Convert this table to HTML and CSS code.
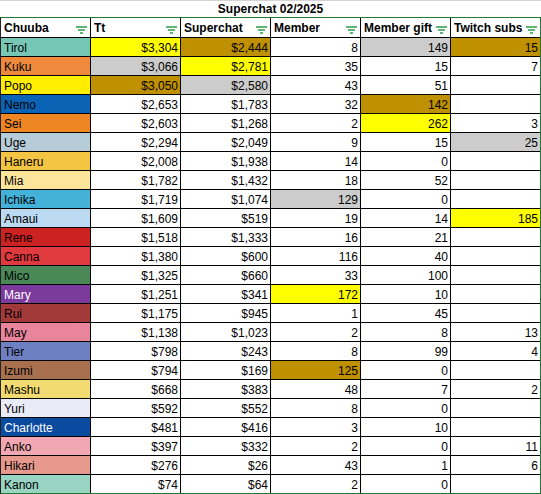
FILE: index.html
```html
<!DOCTYPE html>
<html>
<head>
<meta charset="utf-8">
<link rel="stylesheet" href="styles.css">
</head>
<body>
<div class="title">Superchat 02/2025</div>
<table class="sheet">
<thead>
<tr>
<th><div class="hd"><span>Chuuba</span><svg class="flt" viewBox="0 0 11 8"><path d="M0 1h11M2 4h7M4 7h3"/></svg></div></th>
<th><div class="hd"><span>Tt</span><svg class="flt" viewBox="0 0 11 8"><path d="M0 1h11M2 4h7M4 7h3"/></svg></div></th>
<th><div class="hd"><span>Superchat</span><svg class="flt" viewBox="0 0 11 8"><path d="M0 1h11M2 4h7M4 7h3"/></svg></div></th>
<th><div class="hd"><span>Member</span><svg class="flt" viewBox="0 0 11 8"><path d="M0 1h11M2 4h7M4 7h3"/></svg></div></th>
<th><div class="hd"><span>Member gift</span><svg class="flt" viewBox="0 0 11 8"><path d="M0 1h11M2 4h7M4 7h3"/></svg></div></th>
<th class="last"><div class="hd"><span>Twitch subs</span><svg class="flt" viewBox="0 0 11 8"><path d="M0 1h11M2 4h7M4 7h3"/></svg></div></th>
</tr>
</thead>
<tbody>
<tr><td class="nm c-tirol">Tirol</td><td class="hl-y">$3,304</td><td class="hl-g">$2,444</td><td>8</td><td class="hl-s">149</td><td class="last hl-g">15</td></tr>
<tr><td class="nm c-kuku">Kuku</td><td class="hl-s">$3,066</td><td class="hl-y">$2,781</td><td>35</td><td>15</td><td class="last">7</td></tr>
<tr><td class="nm c-popo">Popo</td><td class="hl-g">$3,050</td><td class="hl-s">$2,580</td><td>43</td><td>51</td><td class="last"></td></tr>
<tr><td class="nm c-nemo">Nemo</td><td>$2,653</td><td>$1,783</td><td>32</td><td class="hl-g">142</td><td class="last"></td></tr>
<tr><td class="nm c-sei">Sei</td><td>$2,603</td><td>$1,268</td><td>2</td><td class="hl-y">262</td><td class="last">3</td></tr>
<tr><td class="nm c-uge">Uge</td><td>$2,294</td><td>$2,049</td><td>9</td><td>15</td><td class="last hl-s">25</td></tr>
<tr><td class="nm c-haneru">Haneru</td><td>$2,008</td><td>$1,938</td><td>14</td><td>0</td><td class="last"></td></tr>
<tr><td class="nm c-mia">Mia</td><td>$1,782</td><td>$1,432</td><td>18</td><td>52</td><td class="last"></td></tr>
<tr><td class="nm c-ichika">Ichika</td><td>$1,719</td><td>$1,074</td><td class="hl-s">129</td><td>0</td><td class="last"></td></tr>
<tr><td class="nm c-amaui">Amaui</td><td>$1,609</td><td>$519</td><td>19</td><td>14</td><td class="last hl-y">185</td></tr>
<tr><td class="nm c-rene">Rene</td><td>$1,518</td><td>$1,333</td><td>16</td><td>21</td><td class="last"></td></tr>
<tr><td class="nm c-canna">Canna</td><td>$1,380</td><td>$600</td><td>116</td><td>40</td><td class="last"></td></tr>
<tr><td class="nm c-mico">Mico</td><td>$1,325</td><td>$660</td><td>33</td><td>100</td><td class="last"></td></tr>
<tr><td class="nm c-mary">Mary</td><td>$1,251</td><td>$341</td><td class="hl-y">172</td><td>10</td><td class="last"></td></tr>
<tr><td class="nm c-rui">Rui</td><td>$1,175</td><td>$945</td><td>1</td><td>45</td><td class="last"></td></tr>
<tr><td class="nm c-may">May</td><td>$1,138</td><td>$1,023</td><td>2</td><td>8</td><td class="last">13</td></tr>
<tr><td class="nm c-tier">Tier</td><td>$798</td><td>$243</td><td>8</td><td>99</td><td class="last">4</td></tr>
<tr><td class="nm c-izumi">Izumi</td><td>$794</td><td>$169</td><td class="hl-g">125</td><td>0</td><td class="last"></td></tr>
<tr><td class="nm c-mashu">Mashu</td><td>$668</td><td>$383</td><td>48</td><td>7</td><td class="last">2</td></tr>
<tr><td class="nm c-yuri">Yuri</td><td>$592</td><td>$552</td><td>8</td><td>0</td><td class="last"></td></tr>
<tr><td class="nm c-charlotte">Charlotte</td><td>$481</td><td>$416</td><td>3</td><td>10</td><td class="last"></td></tr>
<tr><td class="nm c-anko">Anko</td><td>$397</td><td>$332</td><td>2</td><td>0</td><td class="last">11</td></tr>
<tr><td class="nm c-hikari">Hikari</td><td>$276</td><td>$26</td><td>43</td><td>1</td><td class="last">6</td></tr>
<tr class="lastrow"><td class="nm c-kanon">Kanon</td><td>$74</td><td>$64</td><td>2</td><td>0</td><td class="last"></td></tr>
</tbody>
</table>
</body>
</html>
```

FILE: styles.css
```css
html, body {
  margin: 0;
  padding: 0;
  background: #fff;
}
body {
  font-family: "Liberation Sans", Arial, sans-serif;
  font-size: 12px;
  color: #000;
  width: 541px;
}
.title {
  border-top: 1px solid #d4d4d4;
  height: 16px;
  line-height: 17px;
  text-align: center;
  font-weight: bold;
}
.sheet {
  border-collapse: separate;
  border-spacing: 0;
  table-layout: fixed;
  width: 541px;
  border-top: 1px solid #1e7a34;
  border-right: 1px solid #1e7a34;
  border-bottom: 1px solid #1e7a34;
  border-left: 1px solid #222;
}
.sheet th, .sheet td {
  border-right: 1px solid #000;
  border-bottom: 1px solid #000;
  box-sizing: content-box;
  overflow: hidden;
  white-space: nowrap;
}
.sheet th.last, .sheet td.last {
  border-right: none;
}
.sheet th {
  width: 86px;
  height: 17px;
  padding: 2px 0 0 3px;
  line-height: 17px;
  font-weight: bold;
  text-align: left;
}
.hd {
  display: flex;
  align-items: center;
  justify-content: space-between;
  padding-right: 3px;
}
.flt {
  width: 11px;
  height: 8px;
  flex: none;
  margin-top: 2px;
}
.flt path {
  stroke: #2a9d4a;
  stroke-width: 1.3;
  fill: none;
}
.sheet td {
  height: 16px;
  line-height: 16px;
  padding: 2px 2px 0 0;
  text-align: right;
  width: 87px;
}
.sheet td.nm {
  text-align: left;
  padding: 2px 0 0 3px;
  width: 86px;
}
.sheet tr.lastrow td {
  border-bottom: none;
}
.hl-y { background: #ffff00; }
.hl-g { background: #bf9000; }
.hl-s { background: #cccccc; }

.c-tirol { background: #76c7b5; }
.c-kuku { background: #ef8a3c; }
.c-popo { background: #ffee00; }
.c-nemo { background: #0b63b6; }
.c-sei { background: #ef8624; }
.c-uge { background: #b7ccd9; }
.c-haneru { background: #f3c543; }
.c-mia { background: #fde69b; }
.c-ichika { background: #44b2d8; }
.c-amaui { background: #bddaf3; }
.c-rene { background: #cc2222; }
.c-canna { background: #e0393e; }
.c-mico { background: #4b8858; }
.c-mary { background: #7b3a9c; color: #fff; }
.c-rui { background: #a23a3a; }
.c-may { background: #e8849b; }
.c-tier { background: #6e80c1; }
.c-izumi { background: #a9704f; }
.c-mashu { background: #f2dc72; }
.c-yuri { background: #e9ecf7; }
.c-charlotte { background: #0a4a9f; color: #fff; }
.c-anko { background: #f2a8b3; }
.c-hikari { background: #e8998d; }
.c-kanon { background: #99d3c1; }
```
